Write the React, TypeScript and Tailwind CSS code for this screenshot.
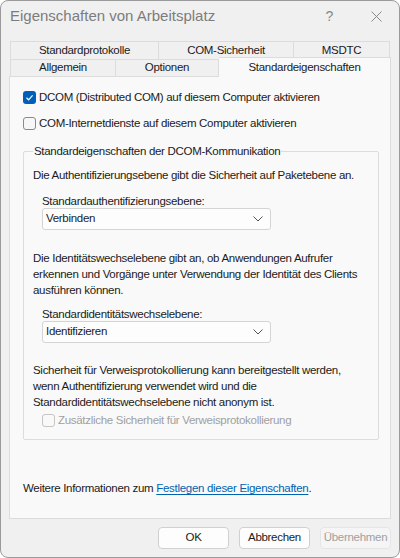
import React, { useState } from "react";

const Check = ({ checked, disabled, onClick }: { checked: boolean; disabled?: boolean; onClick?: () => void }) => (
  <button
    type="button"
    onClick={onClick}
    disabled={disabled}
    className={
      checked
        ? "w-[13px] h-[13px] rounded-[3px] bg-[#005fb8] flex items-center justify-center shrink-0"
        : disabled
        ? "w-[13px] h-[13px] rounded-[3px] border border-[#c5c5c5] bg-[#f9f9f9] shrink-0"
        : "w-[13px] h-[13px] rounded-[3px] border border-[#8a8a8a] bg-[#f7f7f7] shrink-0"
    }
  >
    {checked && (
      <svg width="9" height="9" viewBox="0 0 9 9">
        <path d="M1.5 4.8 L3.6 6.8 L7.6 2.4" stroke="white" strokeWidth="1.2" fill="none" />
      </svg>
    )}
  </button>
);

const Chevron = () => (
  <svg width="10" height="6" viewBox="0 0 10 6">
    <path d="M0.5 0.5 L5 5 L9.5 0.5" stroke="#555" strokeWidth="1" fill="none" />
  </svg>
);

const Combo = ({ value }: { value: string }) => (
  <div className="w-[229px] h-[22px] bg-[#fdfdfd] border border-[#d4d4d4] rounded-[3px] flex items-center justify-between pl-[3px] pr-[7px]">
    <span>{value}</span>
    <Chevron />
  </div>
);

const App = () => {
  const [dcom, setDcom] = useState(true);
  const [internet, setInternet] = useState(false);

  return (
    <div className="w-[400px] h-[558px] bg-[#f0f0f0] border border-[#9a9a9a] rounded-[8px] flex flex-col text-[11.5px] tracking-[-0.3px] text-[#1b1b1b] font-['Segoe_UI','Liberation_Sans',sans-serif] overflow-hidden whitespace-nowrap">
      {/* Titelleiste */}
      <div className="h-[31px] flex items-center justify-between pl-[9px] pr-[17px] shrink-0">
        <span className="text-[15px] tracking-normal text-[#7c7c7c]">Eigenschaften von Arbeitsplatz</span>
        <div className="flex items-center gap-[38px] text-[#8a8a8a]">
          <span className="text-[14px]">?</span>
          <svg width="11" height="11" viewBox="0 0 11 11">
            <path d="M0.5 0.5 L10.5 10.5 M10.5 0.5 L0.5 10.5" stroke="#8a8a8a" strokeWidth="1" />
          </svg>
        </div>
      </div>

      <div className="px-[8px] pt-[9px] flex flex-col">
        {/* Registerkarten */}
        <div className="flex pl-[1px] h-[18px]">
          <div className="w-[149px] border border-b-0 border-[#dcdcdc] flex items-center justify-center">Standardprotokolle</div>
          <div className="w-[135px] border border-b-0 border-l-0 border-[#dcdcdc] flex items-center justify-center">COM-Sicherheit</div>
          <div className="w-[96px] border border-b-0 border-l-0 border-[#dcdcdc] flex items-center justify-center">MSDTC</div>
        </div>
        <div className="flex pl-[1px] h-[17px] items-end">
          <div className="w-[106px] h-[17px] border border-b-0 border-[#dcdcdc] flex items-center justify-center">Allgemein</div>
          <div className="w-[103px] h-[17px] border border-b-0 border-l-0 border-[#dcdcdc] flex items-center justify-center">Optionen</div>
          <div className="w-[172px] h-[20px] -mb-[1px] relative z-10 bg-[#f9f9f9] border border-b-0 border-l-0 border-[#dcdcdc] flex items-start justify-center pt-[1px]">Standardeigenschaften</div>
        </div>

        {/* Seite */}
        <div className="h-[443px] bg-[#f9f9f9] border border-[#dcdcdc] flex flex-col pl-[13px] pr-[11px] pt-[13px]">
          <label className="flex items-center gap-[3px] h-[15px]">
            <Check checked={dcom} onClick={() => setDcom(!dcom)} />
            <span>DCOM (Distributed COM) auf diesem Computer aktivieren</span>
          </label>
          <label className="flex items-center gap-[3px] h-[15px] mt-[11px]">
            <Check checked={internet} onClick={() => setInternet(!internet)} />
            <span>COM-Internetdienste auf diesem Computer aktivieren</span>
          </label>

          {/* Gruppenfeld */}
          <fieldset className="mt-[13px] border border-[#dcdcdc] rounded-[2px] pl-[9px] pr-[10px] pb-[11px] mx-0 min-w-0">
            <legend className="px-[1px] leading-[14px]">Standardeigenschaften der DCOM-Kommunikation</legend>
            <p className="mt-[9px] leading-[16px]">Die Authentifizierungsebene gibt die Sicherheit auf Paketebene an.</p>

            <div className="pl-[9px] mt-[11px] flex flex-col">
              <span className="leading-[14px]">Standardauthentifizierungsebene:</span>
              <Combo value="Verbinden" />
            </div>

            <p className="mt-[20px] leading-[16px]">
              Die Identitätswechselebene gibt an, ob Anwendungen Aufrufer
              <br />
              erkennen und Vorgänge unter Verwendung der Identität des Clients
              <br />
              ausführen können.
            </p>

            <div className="pl-[9px] mt-[9px] flex flex-col">
              <span className="leading-[14px]">Standardidentitätswechselebene:</span>
              <Combo value="Identifizieren" />
            </div>

            <p className="mt-[19px] leading-[16px]">
              Sicherheit für Verweisprotokollierung kann bereitgestellt werden,
              <br />
              wenn Authentifizierung verwendet wird und die
              <br />
              Standardidentitätswechselebene nicht anonym ist.
            </p>

            <label className="pl-[9px] mt-[3px] flex items-center gap-[3px] h-[15px] text-[#a0a0a0]">
              <Check checked={false} disabled />
              <span>Zusätzliche Sicherheit für Verweisprotokollierung</span>
            </label>
          </fieldset>

          <p className="mt-[40px] leading-[16px]">
            Weitere Informationen zum{" "}
            <a href="#" className="text-[#0063b1] underline underline-offset-2">Festlegen dieser Eigenschaften</a>.
          </p>
        </div>

        {/* Schaltflächen */}
        <div className="flex justify-end gap-[10px] pt-[8px]">
          <button className="w-[71px] h-[22px] bg-[#fdfdfd] border border-[#d0d0d0] rounded-[4px]">OK</button>
          <button className="w-[71px] h-[22px] bg-[#fdfdfd] border border-[#d0d0d0] rounded-[4px]">Abbrechen</button>
          <button disabled className="w-[71px] h-[22px] bg-[#f5f5f5] border border-[#e5e5e5] rounded-[4px] text-[#a0a0a0]">Übernehmen</button>
        </div>
      </div>
    </div>
  );
};

export default App;
